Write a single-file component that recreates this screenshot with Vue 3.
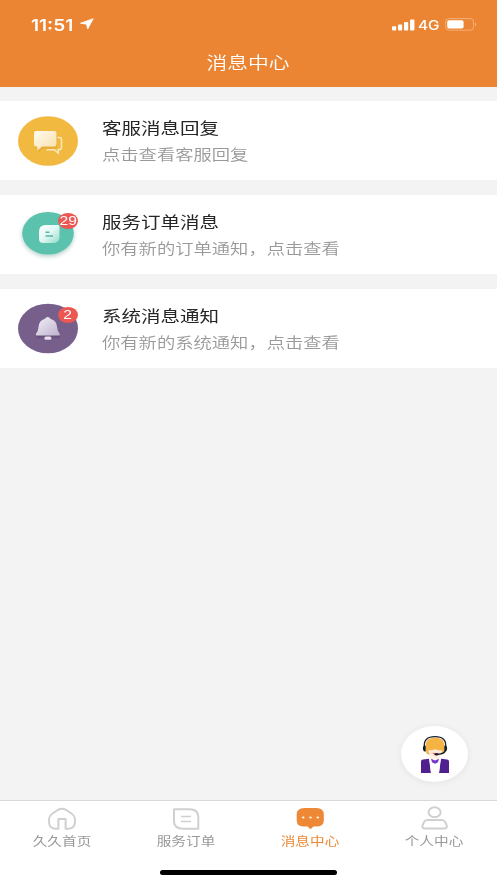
<script setup>
const messages = [
  { kind: 'chat', title: '客服消息回复', text: '点击查看客服回复', badge: '' },
  { kind: 'order', title: '服务订单消息', text: '你有新的订单通知，点击查看', badge: '29' },
  { kind: 'bell', title: '系统消息通知', text: '你有新的系统通知，点击查看', badge: '2' },
]
const tabs = [
  { kind: 'home', label: '久久首页' },
  { kind: 'order', label: '服务订单' },
  { kind: 'message', label: '消息中心', active: true },
  { kind: 'user', label: '个人中心' },
]
</script>

<template>
  <div class="screen">
    <header class="header">
      <div class="status">
        <span class="time">11:51</span>
        <svg class="arrow" width="14" height="12" viewBox="0 0 14 12"><path d="M13.2.7 7.7 11 6.6 6.2.5 5.2Z" fill="#fff" stroke="#fff" stroke-width=".8" stroke-linejoin="round" /></svg>
        <span class="spacer"></span>
        <svg width="24" height="12" viewBox="0 0 24 12" fill="#fff">
          <rect x="0" y="7.3" width="4.2" height="4.2" rx="1" /><rect x="6" y="5.5" width="4.2" height="6" rx="1" />
          <rect x="12" y="3" width="4.2" height="8.5" rx="1" /><rect x="18" y=".4" width="4.4" height="11.1" rx="1" />
        </svg>
        <span class="network">4G</span>
        <svg class="battery" width="32" height="13" viewBox="0 0 32 13">
          <rect x=".6" y=".6" width="28" height="11.6" rx="3.4" fill="none" stroke="#f3b07a" />
          <rect x="2.2" y="2.2" width="16.4" height="8.4" rx="1.8" fill="#fff" />
          <path d="M30.2 4.5q2.2 1.9 0 3.8Z" fill="#f5bd8e" />
        </svg>
      </div>
      <h1 class="heading"><span class="wide">消息中心</span></h1>
    </header>

    <main class="list">
      <section v-for="m in messages" :key="m.kind" class="card">
        <div class="avatar">
          <svg v-if="m.kind === 'chat'" width="60" height="52" viewBox="0 0 60 52">
            <defs><linearGradient id="chatFill" x1="0" y1="0" x2="1" y2="1"><stop stop-color="#fffaf0" /><stop offset="1" stop-color="#f8dfa8" /></linearGradient></defs>
            <ellipse cx="30" cy="26" rx="30" ry="24.8" fill="#f1b940" />
            <path d="M39.5 22.5h1.8q2.2 0 2.2 2v8.3q0 1.8-2 1.8h-1.2v3.5l-4-3.4h-7.8" fill="none" stroke="#fae8bd" stroke-width="1.5" />
            <path d="M18.2 17h18q2.3 0 2.3 2.2v11.1q0 2.2-2.3 2.2H24.1l-4.8 4.1v-4.1h-1.1q-2.2 0-2.2-2.2V19.2Q16 17 18.2 17Z" fill="#d99e2d" opacity=".35" transform="translate(.7 1.5)" />
            <path d="M18.2 16h18q2.3 0 2.3 2.2v11.1q0 2.2-2.3 2.2H24.1l-4.8 4.1v-4.1h-1.1q-2.2 0-2.2-2.2V18.2Q16 16 18.2 16Z" fill="url(#chatFill)" />
          </svg>
          <svg v-else-if="m.kind === 'order'" class="order-icon" width="60" height="52" viewBox="0 0 60 52">
            <defs><linearGradient id="noteFill" x1="0" y1="0" x2="1" y2="1"><stop stop-color="#fff" /><stop offset=".5" stop-color="#e2f7f3" /><stop offset="1" stop-color="#90dacb" /></linearGradient></defs>
            <ellipse cx="30" cy="24.3" rx="25.8" ry="21.3" fill="#5bc2ad" />
            <path d="M27.5 16H40q1.5 0 1.5 1.5V28q0 6-7 6H25.5q-4.5 0-4.5-4v-7q0-7 6.5-7Z" fill="url(#noteFill)" />
            <path d="M27.5 23.2h4M27.5 27h7.5" stroke="#57b7a4" stroke-width="1.5" />
          </svg>
          <svg v-else width="60" height="52" viewBox="0 0 60 52">
            <defs><linearGradient id="bellFill" x1="0" y1="0" x2="1" y2="1"><stop stop-color="#f4f0f8" /><stop offset="1" stop-color="#bdb2cd" /></linearGradient></defs>
            <ellipse cx="30" cy="25.5" rx="30" ry="24.8" fill="#775f8c" />
            <path d="M28 15.5q2-2.2 4 0 7.3 1.5 7.6 9.2.2 5.8 2.8 7.2v1.8H18.5v-1.8q2.5-1.8 2.5-7.2.2-7.6 7-9.2Z" fill="#4f3c65" opacity=".35" transform="translate(0 1.5)" />
            <path d="M27 15.8q.6-1.6 2.7-1.8 2 .2 2.6 1.8 6.6 1.8 6.9 8.8.3 4.5 2.6 6.3.4 1.5-1.2 1.6H18.9q-1.4-.2-1-1.6 2.3-1.8 2.5-6.3.3-7 6.6-8.8Z" fill="url(#bellFill)" />
            <rect x="26.4" y="33.6" width="7" height="3.2" rx="1.5" fill="#e7e0ed" />
          </svg>
          <span v-if="m.badge" class="badge"><span class="badge-text">{{ m.badge }}</span></span>
        </div>
        <div class="copy">
          <div class="title"><span class="wide">{{ m.title }}</span></div>
          <div class="text"><span class="wide">{{ m.text }}</span></div>
        </div>
      </section>
    </main>

    <button class="service" aria-label="客服">
      <svg width="30" height="38" viewBox="0 0 30 38">
        <path d="M10 18h10v8l-5 3-5-3Z" fill="#fff0e8" />
        <path d="M5.5 11Q5.5 2.8 15 2.8T24.5 11v5.5q-1 2.5-3 3h-13q-2-.5-3-3Z" fill="#f5b344" />
        <path d="M8.2 15.2q4 .6 7-1 3.5 1.3 7 1.3-.6 6-7 6.3-6.2-.3-7-6.6Z" fill="#fce8dc" />
        <path d="M4.3 12Q3.4 1.6 15 1.6T25.7 12v3q-1 4-8.2 4.3" fill="none" stroke="#161b24" stroke-width="1.3" />
        <path d="M4 10.5q-2.3 2.5 0 6l1.7-.3v-5.4ZM26 10.5q2.3 2.5 0 6l-1.7-.3v-5.4Z" fill="#161b24" />
        <ellipse cx="16.5" cy="19.2" rx="2" ry="1.3" fill="#161b24" /><path d="M12.8 18.4h2.2" stroke="#e74e48" />
        <path d="M1 38V26.4q0-1.6 2-1.9l6-.8L11 38ZM29 38V26.4q0-1.6-2-1.9l-6-.8L19 38Z" fill="#50208f" />
        <path d="M9.4 24 11 38h8l1.6-14Z" fill="#fff" /><path d="m11 23.8 4 1.6 4-1.6-1 3.4-3 1.5-3-1.5Z" fill="#7737cc" />
      </svg>
    </button>

    <nav class="tabs">
      <div v-for="t in tabs" :key="t.kind" class="tab" :class="{ active: t.active }">
        <svg width="30" height="26" viewBox="0 0 30 26" fill="none" stroke="#d0d0d0" stroke-width="2" stroke-linejoin="round">
          <path v-if="t.kind === 'home'" d="M11.4 23.7H8.2q-5.6-.5-6.1-5.7v-4.5q.2-3 2.8-4.5l5.8-4q4.3-2.3 8.6 0L25.1 9q2.6 1.5 2.8 4.5V18q-.5 5.2-6.1 5.7h-3.2V14h-7.2Z" />
          <g v-else-if="t.kind === 'order'"><path d="M3 4.3h15.5q8.8 0 8.8 8v11.4H12.5Q3 23.7 3 16.2Z" /><path d="M10 11.5h10M10 16.5h10" stroke-width="1.7" /></g>
          <g v-else-if="t.kind === 'message'" stroke="none">
            <path d="M8.5 3.1h12q7.3 0 7.3 6.5v6q0 5.8-6.5 5.8H17.5L14.5 24.2l-3-2.8H7.3Q.7 21.4.7 15.2V9.6q0-6.5 7.8-6.5Z" fill="#ed8936" />
            <g fill="#fff8ed"><ellipse cx="7.2" cy="12.5" rx="1.3" ry="1.1" /><ellipse cx="14.5" cy="12.5" rx="1.3" ry="1.1" /><ellipse cx="21.8" cy="12.5" rx="1.3" ry="1.1" /></g>
          </g>
          <g v-else><ellipse cx="14.6" cy="7.2" rx="6" ry="4.9" /><path d="M7.6 14.9h14q2.5 0 3.5 2l1.5 3.2q1.2 3.3-2.5 3.5h-19q-3.7-.2-2.5-3.5l1.5-3.2q1-2 3.5-2Z" /></g>
        </svg>
        <span class="tab-label wide">{{ t.label }}</span>
      </div>
      <div class="home-indicator"></div>
    </nav>
  </div>
</template>

<style>
body { margin: 0; }
</style>

<style scoped>
.screen {
  position: relative;
  display: flex;
  flex-direction: column;
  width: 100%;
  height: 883px;
  overflow: hidden;
  background: #f3f3f3;
  font-family: "Liberation Sans", "Noto Sans CJK SC", sans-serif;
}
.header { height: 87px; flex: none; background: #ec8533; color: #fff; }
.status { display: flex; align-items: center; height: 49px; padding: 0 20px 0 31px; box-sizing: border-box; }
.time { width: 49px; font: 600 16px/20px Inter, sans-serif; transform: scaleX(1.19); transform-origin: left; }
.arrow { margin-top: -1px; }
.spacer { flex: 1; }
.network { width: 22px; margin: 0 4px 0 2px; font: 500 13px/16px Inter, sans-serif; transform: scaleX(1.18); transform-origin: left; }
.battery { margin-left: 1px; }
.heading { margin: 0; padding-right: 2px; text-align: center; font-weight: 350; font-size: 17px; line-height: 30px; }
.wide { display: inline-block; white-space: nowrap; transform: scaleX(1.22); }
.list { display: flex; flex-direction: column; gap: 15px; padding-top: 14px; }
.card { display: flex; height: 79px; background: #fff; }
.avatar { position: relative; width: 60px; height: 52px; margin: 13.5px 24px 0 18px; }
.avatar svg { display: block; }
.order-icon { filter: drop-shadow(0 2px 2px rgba(50, 120, 105, .35)); }
.badge {
  position: absolute;
  top: 4px;
  right: 0;
  display: flex;
  align-items: center;
  justify-content: center;
  width: 20px;
  height: 16px;
  border-radius: 50%;
  background: #ec5753;
  color: #fff;
  font: 13px/16px "Liberation Sans", sans-serif;
}
.badge-text { transform: scaleX(1.2); }
.copy { padding-top: 15px; }
.copy .wide { transform-origin: left; }
.title { height: 26px; font-size: 16px; line-height: 26px; color: #262626; }
.text { height: 26px; font-size: 15px; line-height: 26px; color: #999; font-weight: 350; }
.service {
  position: absolute;
  left: 401px;
  top: 726px;
  display: flex;
  align-items: center;
  justify-content: center;
  width: 67px;
  height: 56px;
  padding: 0;
  border: 0;
  border-radius: 50%;
  background: #fff;
  box-shadow: 0 1px 7px rgba(0, 0, 0, .07);
}
.tabs { position: relative; display: flex; height: 83px; margin-top: auto; box-sizing: border-box; border-top: 1px solid #d9d9d9; background: #fff; }
.tab { display: flex; flex: 1; flex-direction: column; align-items: center; padding-top: 4px; }
.tab-label { margin: 2px 1px 0 0; color: #999; font-size: 12px; line-height: 18px; }
.active .tab-label { color: #ed8936; }
.home-indicator { position: absolute; left: 160px; bottom: 8px; width: 177px; height: 5px; border-radius: 3px; background: #000; }
</style>
